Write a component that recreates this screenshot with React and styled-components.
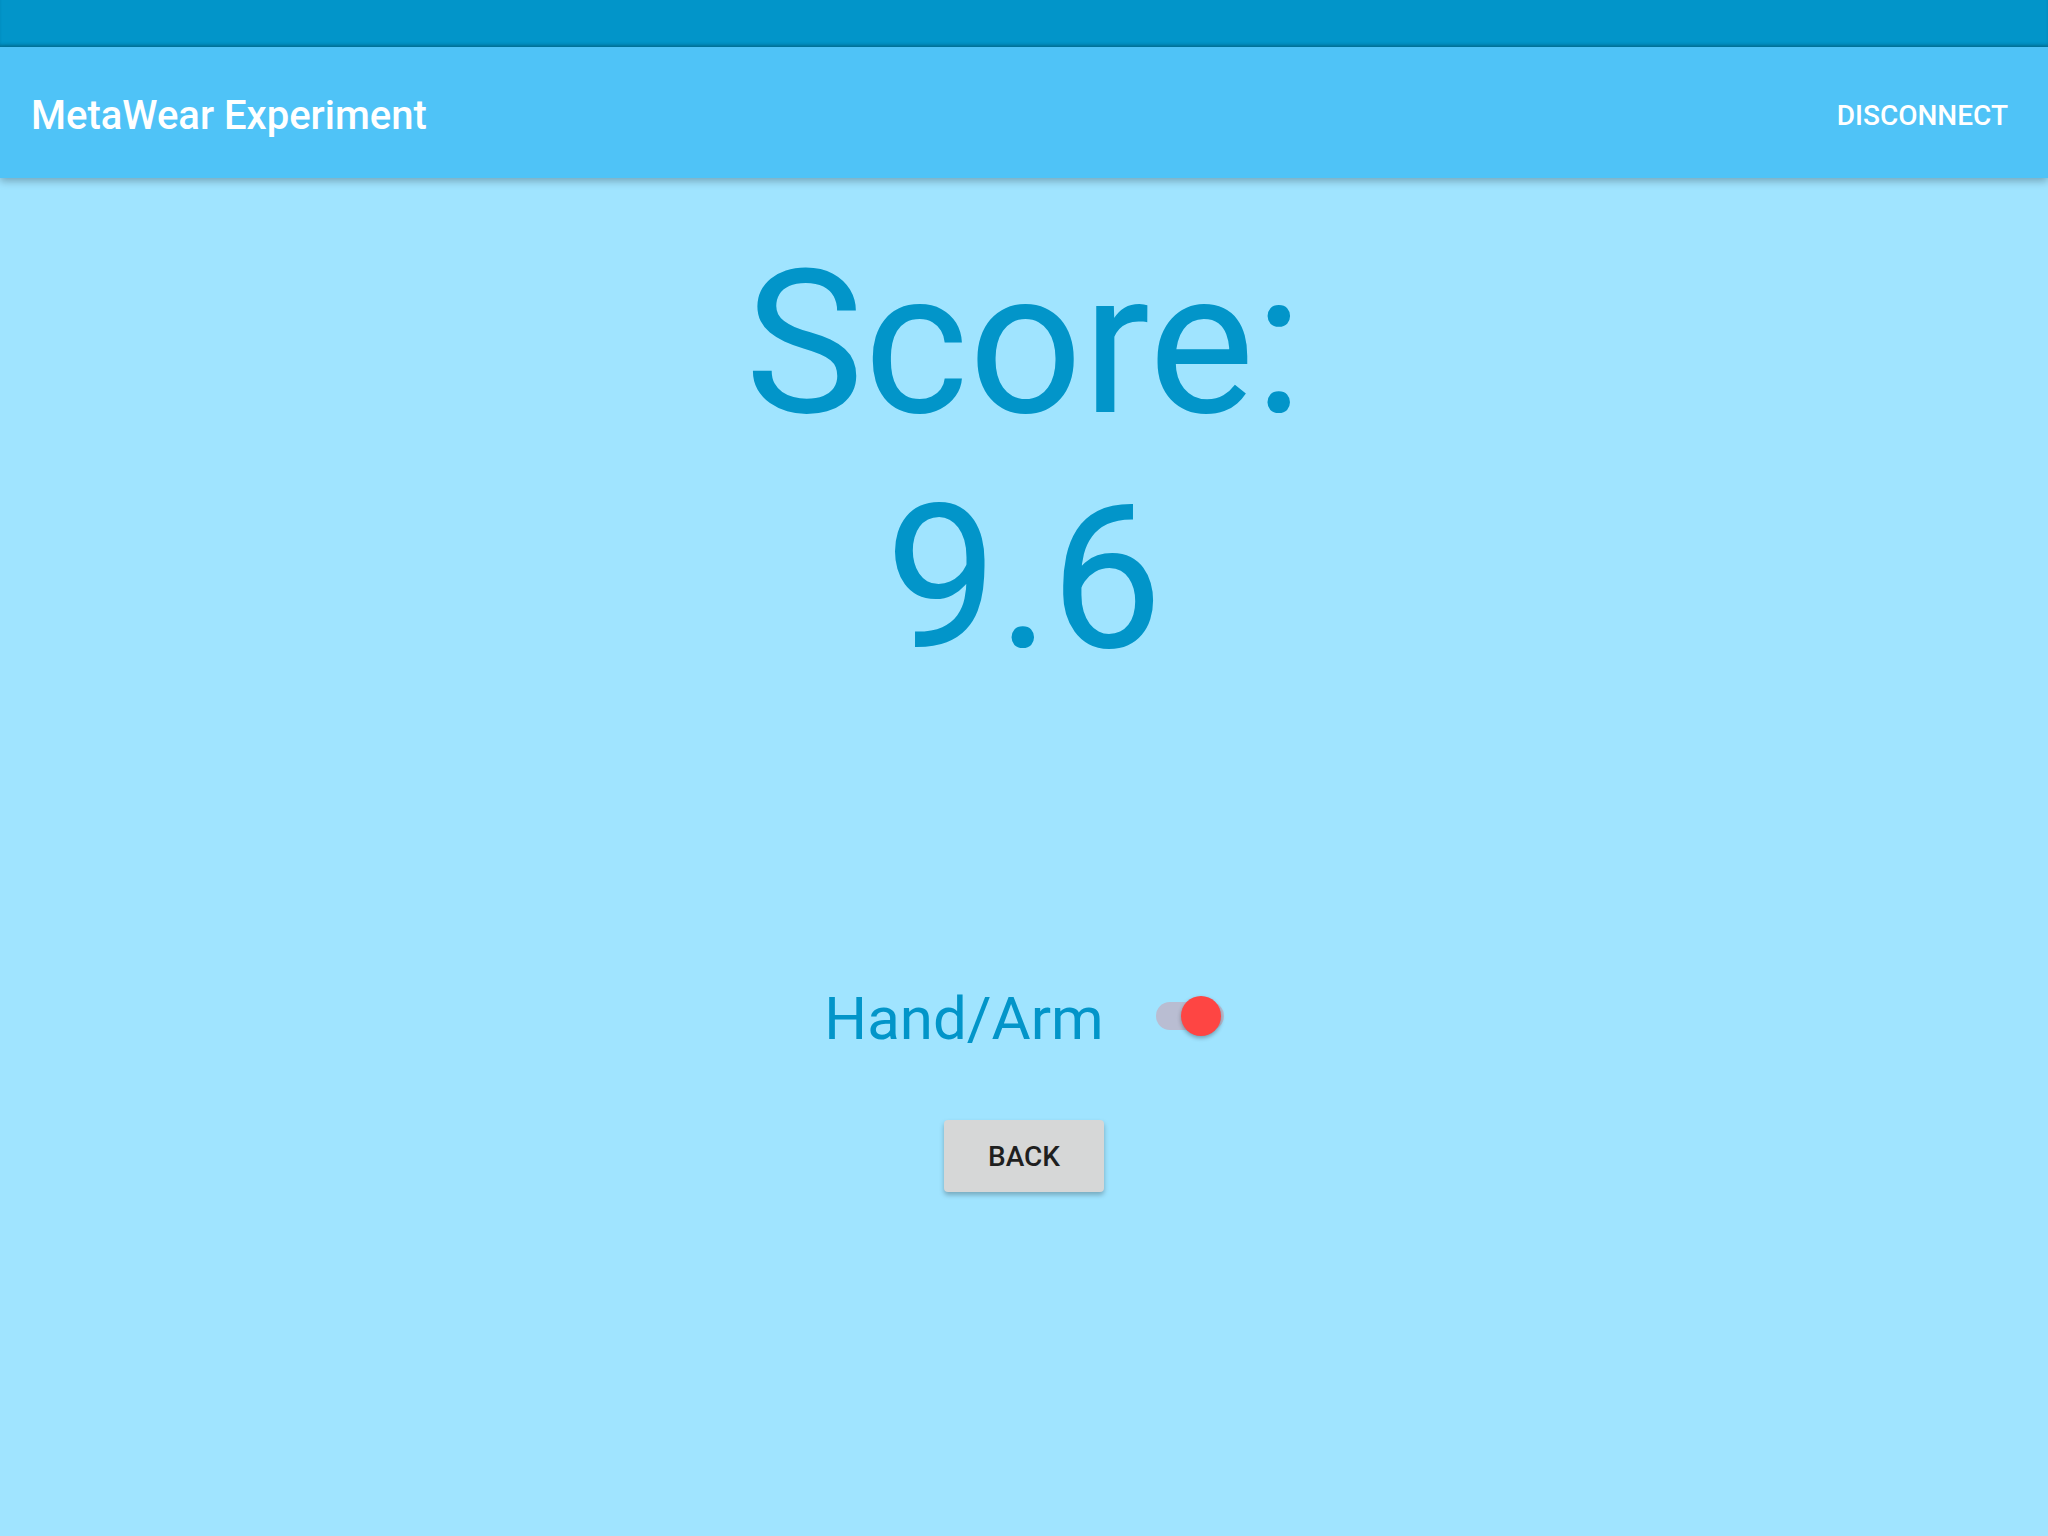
import React, { useState } from 'react';
import styled, { createGlobalStyle } from 'styled-components';

const GlobalStyle = createGlobalStyle`
	html, body {
		margin: 0;
		padding: 0;
		background: #a0e4ff;
	}
	body {
		font-family: Roboto, "Noto Sans", "Liberation Sans", sans-serif;
	}
`;

const Root = styled.div`
	display: flex;
	flex-direction: column;
	min-height: 100vh;
	background: #a0e4ff;
`;

const StatusBar = styled.div`
	height: 47px;
	background: #0295c9;
	box-shadow: inset 0 -3px 3px -1px rgba(0, 0, 0, 0.22);
`;

const AppBar = styled.header`
	position: relative;
	z-index: 1;
	display: flex;
	align-items: center;
	justify-content: space-between;
	height: 131px;
	box-sizing: border-box;
	padding: 6px 40px 0 31px;
	background: #4fc3f7;
	box-shadow: 0 3px 8px rgba(0, 0, 0, 0.28);
`;

const Title = styled.h1`
	margin: 0;
	font-size: 40px;
	font-weight: 500;
	color: #ffffff;
`;

const ActionButton = styled.button`
	border: none;
	background: none;
	padding: 0;
	font-family: inherit;
	font-size: 28px;
	font-weight: 500;
	color: #ffffff;
	text-transform: uppercase;
	cursor: pointer;
`;

const Content = styled.main`
	display: flex;
	flex-direction: column;
	align-items: center;
	padding-top: 48px;
`;

const Score = styled.div`
	font-size: 200px;
	line-height: normal;
	color: #0295c9;
	text-align: center;
`;

const ScoreLine = styled.span`
	display: block;
`;

const ToggleRow = styled.div`
	display: flex;
	align-items: center;
	gap: 52px;
	margin-top: 287px;
`;

const ToggleLabel = styled.span`
	font-size: 60px;
	line-height: normal;
	color: #0295c9;
`;

const SwitchRoot = styled.button`
	position: relative;
	width: 68px;
	height: 40px;
	margin-bottom: 6px;
	padding: 0;
	border: none;
	background: none;
	cursor: pointer;
`;

const Track = styled.span`
	display: block;
	width: 68px;
	height: 28px;
	margin: 6px 0;
	border-radius: 14px;
	background: ${({ on }) => (on ? '#b9bdd2' : '#b3b8bd')};
`;

const Thumb = styled.span`
	position: absolute;
	top: 0;
	left: ${({ on }) => (on ? '25px' : '-2px')};
	width: 40px;
	height: 40px;
	border-radius: 50%;
	background: ${({ on }) => (on ? '#fe4543' : '#f1f1f1')};
	box-shadow: 0 2px 4px rgba(0, 0, 0, 0.3);
`;

const BackButton = styled.button`
	width: 160px;
	height: 72px;
	margin-top: 66px;
	border: none;
	border-radius: 4px;
	background: #d6d7d7;
	box-shadow: 0 3px 5px rgba(0, 0, 0, 0.26);
	font-family: inherit;
	font-size: 28px;
	font-weight: 500;
	color: #1f1f1f;
	text-transform: uppercase;
	cursor: pointer;
`;

const App = () => {
	const [handArm, setHandArm] = useState(true);

	return (
		<Root>
			<GlobalStyle />
			<StatusBar />
			<AppBar>
				<Title>MetaWear Experiment</Title>
				<ActionButton>Disconnect</ActionButton>
			</AppBar>
			<Content>
				<Score>
					<ScoreLine>Score:</ScoreLine>
					<ScoreLine>9.6</ScoreLine>
				</Score>
				<ToggleRow>
					<ToggleLabel>Hand/Arm</ToggleLabel>
					<SwitchRoot role="switch" aria-checked={handArm} onClick={() => setHandArm(!handArm)}>
						<Track on={handArm} />
						<Thumb on={handArm} />
					</SwitchRoot>
				</ToggleRow>
				<BackButton>Back</BackButton>
			</Content>
		</Root>
	);
};

export default App;
